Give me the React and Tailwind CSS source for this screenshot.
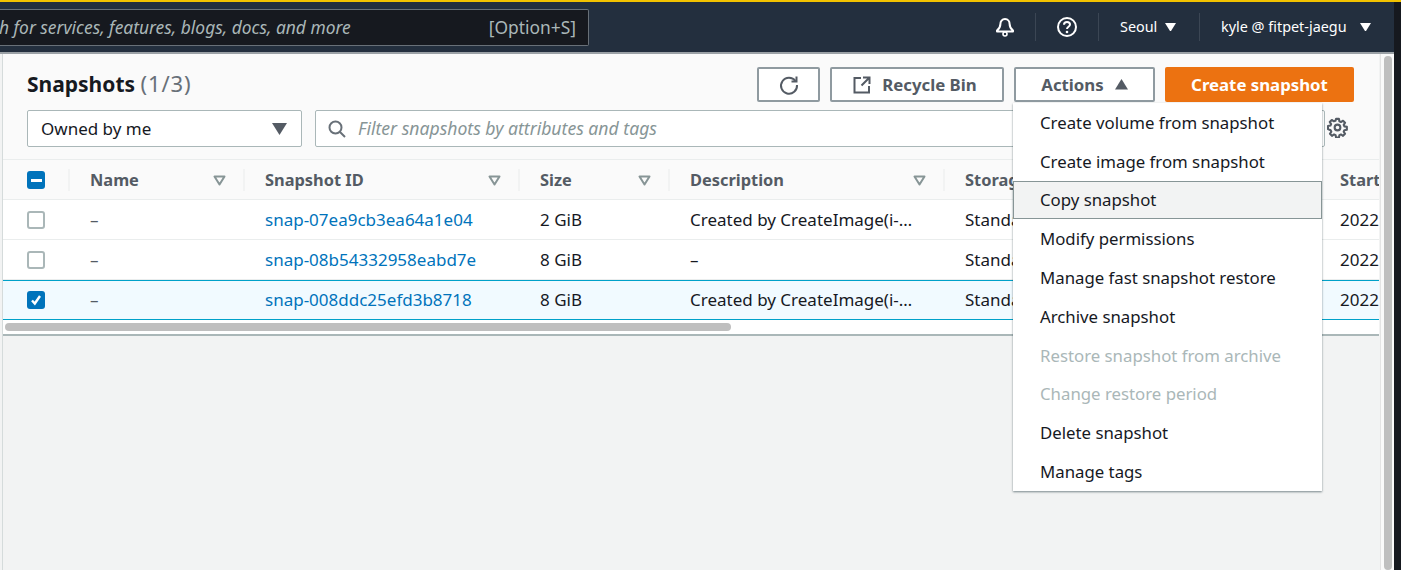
import React from 'react';

const font = "font-['Noto_Sans',sans-serif]";

const columns = [
  { label: 'Name', width: 'w-[175px]' },
  { label: 'Snapshot ID', width: 'w-[275px]' },
  { label: 'Size', width: 'w-[150px]' },
  { label: 'Description', width: 'w-[275px]' },
  { label: 'Storage tier', width: 'w-[375px]' },
  { label: 'Started', width: 'w-[200px]' },
];

const rows = [
  { id: 'snap-07ea9cb3ea64a1e04', size: '2 GiB', desc: 'Created by CreateImage(i-…' },
  { id: 'snap-08b54332958eabd7e', size: '8 GiB', desc: '–' },
  { id: 'snap-008ddc25efd3b8718', size: '8 GiB', desc: 'Created by CreateImage(i-…', selected: true },
];

const menu = [
  { label: 'Create volume from snapshot' },
  { label: 'Create image from snapshot' },
  { label: 'Copy snapshot', active: true },
  { label: 'Modify permissions' },
  { label: 'Manage fast snapshot restore' },
  { label: 'Archive snapshot' },
  { label: 'Restore snapshot from archive', disabled: true },
  { label: 'Change restore period', disabled: true },
  { label: 'Delete snapshot' },
  { label: 'Manage tags' },
];

const SortArrow = () => (
  <svg width="13" height="11" viewBox="0 0 13 11" className="shrink-0">
    <path d="M1.5 1.500h10L6.500 9.500z" fill="none" stroke="#879596" strokeWidth="2" strokeLinejoin="round" />
  </svg>
);

const Caret = ({ size = 11, up = false, color = '#fff' }) => (
  <svg width={size} height={size * 0.8} viewBox="0 0 10 8">
    <path d={up ? 'M5 0l5 8H0z' : 'M0 0h10L5 8z'} fill={color} />
  </svg>
);

const Checkbox = ({ state }) => {
  if (!state) return <div className="w-[18px] h-[18px] rounded-[3px] border-2 border-[#aab7b8] bg-white" />;
  return (
    <div className="w-[18px] h-[18px] rounded-[3px] bg-[#0073bb] flex items-center justify-center">
      {state === 'some' ? (
        <div className="w-[11px] h-[3px] bg-white" />
      ) : (
        <svg width="14" height="14" viewBox="0 0 14 14">
          <path d="M3 7.500l2.800 3L11 3" fill="none" stroke="#fff" strokeWidth="2.400" />
        </svg>
      )}
    </div>
  );
};

export default function App() {
  return (
    <div className={`${font} w-[1401px] h-[570px] overflow-hidden flex bg-[#16191f]`}>
      <div className="w-[1394px] flex flex-col shrink-0">
        <div className="h-[2px] bg-[#f2c200] w-[1401px] shrink-0" />

        {/* Top nav */}
        <div className="h-[50px] bg-[#232f3e] flex items-center shrink-0">
          <div className="w-[589px] h-[37px] bg-[#16191f] border border-[#687078] rounded-r-[2px] border-l-0 flex items-center justify-between pr-[12px] text-[17.400px] text-[#aab7b8] overflow-hidden">
            <span className="italic whitespace-nowrap -ml-[1px]">h for services, features, blogs, docs, and more</span>
            <span className="whitespace-nowrap">[Option+S]</span>
          </div>
          <div className="ml-auto flex items-center text-white text-[14.400px] h-[28px]">
            <svg width="22" height="22" viewBox="0 0 22 22" className="mr-[19px]">
              <path d="M11 3c3 0 4.600 2.400 4.600 5 0 3.200 1 4.600 3.400 6.600v1H3v-1c2.400-2 3.400-3.400 3.400-6.600C6.400 5.400 8 3 11 3z" fill="none" stroke="#fff" strokeWidth="2" strokeLinejoin="round" />
              <circle cx="11" cy="18" r="2" fill="none" stroke="#fff" strokeWidth="1.600" />
            </svg>
            <div className="w-px h-full bg-[#3b4654]" />
            <div className="w-[62px] flex justify-center">
              <svg width="22" height="22" viewBox="0 0 22 22">
                <circle cx="11" cy="11" r="9" fill="none" stroke="#fff" strokeWidth="2" />
                <path d="M8 8.700c0-1.700 1.300-2.700 3-2.700s3 1 3 2.500c0 2.300-3 2.300-3 4.500" fill="none" stroke="#fff" strokeWidth="2" />
                <circle cx="11" cy="16" r="1.300" fill="#fff" />
              </svg>
            </div>
            <div className="w-px h-full bg-[#3b4654]" />
            <div className="w-[100px] pl-[21px] flex items-center gap-[8px]">
              <span>Seoul</span>
              <Caret />
            </div>
            <div className="w-px h-full bg-[#3b4654]" />
            <div className="w-[194px] pl-[21px] flex items-center gap-[13px] whitespace-nowrap">
              <span>kyle @ fitpet-jaegu</span>
              <Caret />
            </div>
          </div>
        </div>
        <div className="h-[2px] bg-[#9ba1a6] shrink-0" />

        {/* Content */}
        <div className="flex-1 flex bg-[#f2f3f3] min-h-0">
          <div className="w-[1380px] shrink-0 relative">
            <div className="ml-[2px] h-full border-l border-[#d5dbdb]">
              <div className="w-[1376px] h-[282px] bg-white border-b-2 border-b-[#aab7b8] overflow-hidden flex flex-col">
                {/* Header */}
                <div className="h-[106px] bg-[#fafafa] shrink-0 pl-[24px] pr-[25px] pt-[13px] border-b border-[#eaeded]">
                  <div className="flex items-center justify-between h-[35px]">
                    <h1 className="text-[21px] font-bold text-[#16191f] leading-none whitespace-nowrap -mt-[2px]">
                      Snapshots <span className="text-[22px] font-normal text-[#687078] tracking-[0.04em]">(1/3)</span>
                    </h1>
                    <div className="flex items-center">
                      <button className="w-[63px] h-[35px] bg-white border-2 border-[#8f9aa0] rounded-[2px] flex items-center justify-center">
                        <svg width="22" height="22" viewBox="0 0 22 22">
                          <path d="M17.500 7A8 8 0 1 0 19 11" fill="none" stroke="#545b64" strokeWidth="2" />
                          <path d="M18.500 2.500V7.500H13.500" fill="none" stroke="#545b64" strokeWidth="2" />
                        </svg>
                      </button>
                      <button className="ml-[10px] w-[174px] h-[35px] bg-white border-2 border-[#8f9aa0] rounded-[2px] flex items-center justify-center gap-[10px] pr-[5px] text-[16.800px] font-bold text-[#545b64]">
                        <svg width="20" height="20" viewBox="0 0 20 20">
                          <path d="M9 3H2.500v14.500H17V11M11 2.500h6.500V9M17 3l-7.500 7.500" fill="none" stroke="#545b64" strokeWidth="2" />
                        </svg>
                        Recycle Bin
                      </button>
                      <button className="ml-[10px] w-[141px] h-[35px] bg-white border-2 border-[#8f9aa0] rounded-[2px] flex items-center justify-center gap-[11px] text-[16.800px] font-bold text-[#545b64]">
                        Actions
                        <Caret size={13} up color="#545b64" />
                      </button>
                      <button className="ml-[10px] w-[189px] h-[35px] bg-[#ec7211] rounded-[2px] text-[16.800px] font-bold text-white">
                        Create snapshot
                      </button>
                    </div>
                  </div>
                  <div className="flex items-center mt-[8px]">
                    <div className="w-[275px] h-[37px] bg-white border border-[#aab7b8] rounded-[2px] flex items-center justify-between pl-[13px] pr-[14px] text-[17px] text-[#16191f]">
                      Owned by me
                      <Caret size={15} color="#545b64" />
                    </div>
                    <div className="ml-[13px] w-[1010px] h-[37px] bg-white border border-[#aab7b8] rounded-[2px] flex items-center pl-[12px] text-[17.600px] italic text-[#879596] shrink-0">
                      <svg width="18" height="18" viewBox="0 0 18 18" className="mr-[12px]">
                        <circle cx="7.500" cy="7.500" r="6" fill="none" stroke="#687078" strokeWidth="2" />
                        <path d="M12 12l5 5" stroke="#687078" strokeWidth="2" />
                      </svg>
                      Filter snapshots by attributes and tags
                    </div>
                  </div>
                </div>

                {/* Table */}
                <div className="h-[40px] bg-[#fafafa] shrink-0 flex items-center pt-[1px] border-b border-[#eaeded] whitespace-nowrap">
                  <div className="w-[65px] pl-[24px] shrink-0"><Checkbox state="some" /></div>
                  {columns.map((col) => (
                    <div key={col.label} className={`${col.width} shrink-0 h-[22px] border-l-2 border-[#f2f3f3] pl-[20px] pr-[17px] flex items-center justify-between text-[16.400px] font-bold text-[#545b64]`}>
                      {col.label}
                      <SortArrow />
                    </div>
                  ))}
                </div>
                {rows.map((row) => (
                  <div
                    key={row.id}
                    className={`h-[40px] shrink-0 flex items-center whitespace-nowrap text-[17px] text-[#16191f] ${
                      row.selected ? 'bg-[#f1faff] border-y border-l border-[#00a1c9] -ml-px' : 'border-b border-[#eaeded]'
                    }`}
                  >
                    <div className="w-[67px] pl-[24px] shrink-0"><Checkbox state={row.selected ? 'all' : null} /></div>
                    <div className="w-[175px] pl-[20px] shrink-0 text-[#545b64]">–</div>
                    <div className="w-[275px] pl-[20px] shrink-0 text-[#0073bb]">{row.id}</div>
                    <div className="w-[150px] pl-[20px] shrink-0">{row.size}</div>
                    <div className="w-[275px] pl-[20px] shrink-0">{row.desc}</div>
                    <div className="w-[375px] pl-[20px] shrink-0">Standard</div>
                    <div className="w-[200px] pl-[20px] shrink-0">2022/03/15</div>
                  </div>
                ))}
                {/* Horizontal scrollbar */}
                <div className="flex-1 px-[2px] pt-[3px]">
                  <div className="w-[726px] h-[8px] rounded-full bg-[#bfbfbf]" />
                </div>
              </div>
            </div>

            {/* Actions dropdown */}
            <div className="absolute left-[1013px] top-[49px] w-[309px] bg-white shadow-[0_1px_2px_rgba(0,28,36,0.5)] text-[16.800px] text-[#16191f] whitespace-nowrap">
              {menu.map((item) => (
                <div
                  key={item.label}
                  className={`h-[38.800px] flex items-center ${
                    item.active ? 'bg-[#f2f3f3] border border-[#879596] pl-[26px]' : 'pl-[27px]'
                  } ${item.disabled ? 'text-[#aab7b8]' : ''}`}
                >
                  {item.label}
                </div>
              ))}
            </div>

            {/* Preferences gear */}
            <svg width="21" height="21" viewBox="0 0 22 22" className="absolute left-[1327px] top-[63px]">
              <path d="M9.500 2h3l.5 2.600 1.600.7 2.200-1.400 2.100 2.100-1.400 2.200.7 1.600 2.600.5v3l-2.600.5-.7 1.600 1.400 2.200-2.100 2.100-2.200-1.400-1.600.7-.5 2.600h-3l-.5-2.600-1.600-.7-2.200 1.400-2.100-2.100 1.400-2.200-.7-1.600L1 12.500v-3l2.600-.5.7-1.600-1.400-2.200 2.100-2.100 2.200 1.400L8.800 4z" fill="none" stroke="#545b64" strokeWidth="2.200" strokeLinejoin="round" />
              <circle cx="11" cy="11" r="3" fill="none" stroke="#545b64" strokeWidth="2.200" />
            </svg>
          </div>

          {/* Page scrollbar */}
          <div className="w-[14px] bg-[#fafafa] border-l border-[#e4e4e4] pl-[3px] pr-[2px] pt-[2px] shrink-0">
            <div className="h-full rounded-full bg-[#bfbfbf]" />
          </div>
        </div>
      </div>
    </div>
  );
}
